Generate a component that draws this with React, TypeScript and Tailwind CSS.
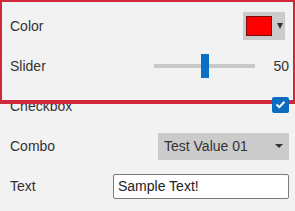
export default function App() {
  return (
    <div className="relative w-[295px] h-[211px] overflow-hidden bg-[#f2f2f2] text-[14px] text-[#333] font-['Liberation_Sans',Arial,sans-serif]">
      <div className="flex flex-col pt-[6px] pl-[10px] pr-[6px]">
        {/* Color */}
        <div className="flex h-10 items-center justify-between">
          <span>Color</span>
          <div className="mr-[4px] flex h-[28px] w-[42px] items-center bg-[#cbcbcb] pl-[3px]">
            <div className="h-[20px] w-[26px] border border-[#7a0c0c] bg-[#ff0000]" />
            <svg width="6" height="6" viewBox="0 0 6 6" className="ml-[5px]">
              <path d="M0 0 L6 0 L3 6 Z" fill="#333" />
            </svg>
          </div>
        </div>

        {/* Slider */}
        <div className="flex h-10 items-center justify-between">
          <span>Slider</span>
          <div className="flex items-center">
            <div className="relative h-[4px] w-[101px] bg-[#c8c8c8]">
              <div className="absolute left-[47px] top-[-10px] h-[24px] w-[8px] bg-[#0a70c6]" />
            </div>
            <span className="ml-[18px]">50</span>
          </div>
        </div>

        {/* Checkbox */}
        <div className="flex h-10 items-center justify-between">
          <span>Checkbox</span>
          <div className="relative z-20 mb-[3px] flex h-[16px] w-[17px] items-center justify-center rounded-[2px] bg-[#0b6cc0]">
            <svg width="11" height="9" viewBox="0 0 11 9">
              <path d="M1.5 4.5 L4.3 7.2 L9.5 1.8" stroke="#fff" strokeWidth="2" fill="none" />
            </svg>
          </div>
        </div>

        {/* Combo */}
        <div className="flex h-10 items-center justify-between">
          <span>Combo</span>
          <div className="flex h-[27px] w-[131px] items-center justify-between bg-[#cbcbcb] pl-[6px] pr-[6px]">
            <span>Test Value 01</span>
            <svg width="8" height="4" viewBox="0 0 8 4">
              <path d="M0 0 L8 0 L4 4 Z" fill="#333" />
            </svg>
          </div>
        </div>

        {/* Text */}
        <div className="flex h-10 items-center justify-between">
          <span>Text</span>
          <div className="flex h-[25px] w-[176px] items-center rounded-[2px] border border-[#7a7a7a] bg-white pl-[4px] text-[#222]">
            Sample Text!
          </div>
        </div>
      </div>

      <div className="pointer-events-none absolute left-0 top-0 z-10 h-[104px] w-[295px] border-x-2 border-t-2 border-b-4 border-[#d0283a]" />
    </div>
  );
}
